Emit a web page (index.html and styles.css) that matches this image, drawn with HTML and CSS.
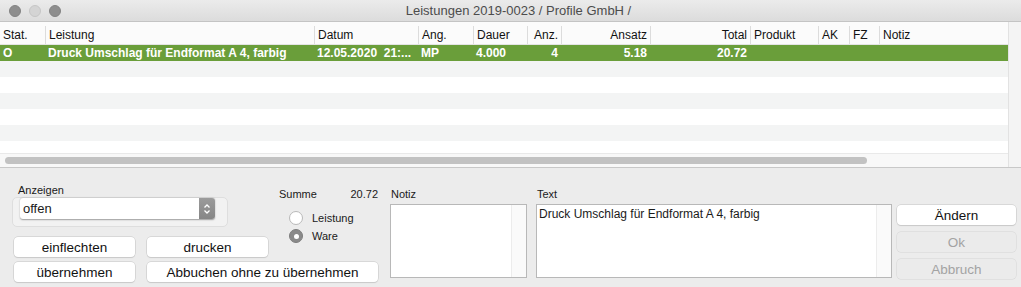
FILE: index.html
```html
<!DOCTYPE html>
<html lang="de">
<head>
  <meta charset="UTF-8">
  <title>Leistungen 2019-0023 / Profile GmbH /</title>
  <link rel="stylesheet" href="styles.css">
</head>
<body>
  <div class="window">

    <header class="titlebar">
      <div class="lights"><span class="dark"></span><span></span><span class="dark"></span></div>
      <div class="title">Leistungen 2019-0023 / Profile GmbH /</div>
    </header>

    <section class="list">
      <div class="grid">
        <div class="row head">
          <div class="c">Stat.</div>
          <div class="c">Leistung</div>
          <div class="c">Datum</div>
          <div class="c">Ang.</div>
          <div class="c">Dauer</div>
          <div class="c r">Anz.</div>
          <div class="c r">Ansatz</div>
          <div class="c r">Total</div>
          <div class="c">Produkt</div>
          <div class="c">AK</div>
          <div class="c">FZ</div>
          <div class="c">Notiz</div>
        </div>
        <div class="row sel">
          <div class="c">O</div>
          <div class="c">Druck Umschlag für Endformat A 4, farbig</div>
          <div class="c">12.05.2020&nbsp;&nbsp;21:...</div>
          <div class="c">MP</div>
          <div class="c">4.000</div>
          <div class="c r">4</div>
          <div class="c r">5.18</div>
          <div class="c r">20.72</div>
          <div class="c"></div>
          <div class="c"></div>
          <div class="c"></div>
          <div class="c"></div>
        </div>
        <div class="row alt"></div>
        <div class="row"></div>
        <div class="row alt"></div>
        <div class="row"></div>
        <div class="row alt"></div>
        <div class="row last"></div>
        <div class="hscroll"><div class="thumb"></div></div>
      </div>
      <div class="vscroll"></div>
    </section>

    <section class="panel">
      <div class="left">
        <div class="anzeigen">
          <label>Anzeigen</label>
          <div class="group">
            <div class="select">
              <span>offen</span>
              <span class="stepper">
                <svg width="10" height="14" viewBox="0 0 10 14"><path d="M2.5 5.5 L5 3 L7.5 5.5 M2.5 8.5 L5 11 L7.5 8.5" fill="none" stroke="#fff" stroke-width="1.3"/></svg>
              </span>
            </div>
          </div>
        </div>
        <div class="summe">
          <div class="sum-line"><span>Summe</span><span>20.72</span></div>
          <div class="radio first"><span class="dot"></span>Leistung</div>
          <div class="radio on"><span class="dot"></span>Ware</div>
        </div>
        <button class="btn b1">einflechten</button>
        <button class="btn b2">drucken</button>
        <button class="btn b3">übernehmen</button>
        <button class="btn b4">Abbuchen ohne zu übernehmen</button>
      </div>

      <div class="field notiz">
        <label>Notiz</label>
        <div class="area"><div class="txt"></div><div class="bar"></div></div>
      </div>

      <div class="field text">
        <label>Text</label>
        <div class="area"><div class="txt">Druck Umschlag für Endformat A 4, farbig</div><div class="bar"></div></div>
      </div>

      <div class="actions">
        <button class="btn">Ändern</button>
        <button class="btn off">Ok</button>
        <button class="btn off">Abbruch</button>
      </div>
    </section>

  </div>
</body>
</html>
```

FILE: styles.css
```css
*{ box-sizing: border-box; }

body{
  margin: 0; padding: 0;
  background-color: #ececec;
  font-family: "Liberation Sans", Arial, sans-serif;
  font-size: 12px;
  color: #1a1a1a;
}

.window{ width: 1021px; height: 287px; overflow: hidden; }

/* titlebar */
.titlebar{
  height: 22px;
  display: flex;
  align-items: center;
  position: relative;
  background: linear-gradient(#ebebeb, #dcdcdc);
  border-bottom: 1px solid #c4c4c4;
}
.titlebar .lights{ display: flex; gap: 8px; padding-left: 9px; padding-top: 1px; }
.titlebar .lights span{
  width: 12px; height: 12px; border-radius: 50%;
  background: #d4d4d4; border: 1px solid #c6c6c6;
}
.titlebar .lights span.dark{ background: #8e8e8e; border-color: #838383; }
.titlebar .title{
  position: absolute; left: 0; right: 0; text-align: center;
  font-size: 13px; color: #4c4c4c; padding-left: 16px;
}

/* table */
.list{ display: flex; height: 146px; border-bottom: 1px solid #c8c8c8; background: #fff; }
.list .grid{ width: 1009px; display: flex; flex-direction: column; border-right: 1px solid #e2e2e2; }
.list .vscroll{ flex: 1; background: #f4f4f4; }

.row{
  display: grid;
  grid-template-columns: 45px 269px 104px 55px 54px 34px 89px 100px 68px 31px 30px 1fr;
  height: 16px;
  flex: none;
}
.row .c{ padding: 0 3px; white-space: nowrap; overflow: hidden; line-height: 16px; }
.row .c.r{ text-align: right; }

.row.head{ height: 23px; background: #fbfbfb; border-bottom: 1px solid #e4e4e4; }
.row.head .c{ color: #111; border-left: 1px solid #dcdcdc; margin: 4px 0 0; line-height: 18px; }
.row.head .c:first-child{ border-left: none; }

.row.sel{ background: #6a9e3a; color: #fff; font-weight: bold; }
.row.alt{ background: #f3f4f4; }
.row.last{ height: 12px; }

.hscroll{ height: 15px; background: #f8f8f8; border-top: 1px solid #e9e9e9; padding: 3px 0 0 5px; }
.hscroll .thumb{ width: 862px; height: 7px; border-radius: 4px; background: #c2c2c2; }

/* bottom panel */
.panel{ display: flex; align-items: flex-start; padding: 16px 0 0 12px; }

.left{
  width: 366px;
  display: grid;
  grid-template-columns: 135px 142px 89px;
  grid-template-rows: 48px 20px 20px;
  row-gap: 5px;
}
.anzeigen{ grid-column: 1 / 3; grid-row: 1; }
.anzeigen label{ display: block; font-size: 11px; padding-left: 6px; height: 13px; line-height: 13px; }
.anzeigen .group{
  width: 216px; height: 30px;
  border: 1px solid #dedede; border-radius: 5px;
  background: #f2f2f2;
  padding: 0 0 0 7px;
}
.select{
  width: 195px; height: 21px;
  display: flex; align-items: center; justify-content: space-between;
  background: #fff;
  border-radius: 3px;
  box-shadow: 0 0.5px 1.5px rgba(0,0,0,.35);
  font-size: 13px; padding-left: 3px;
}
.select .stepper{
  width: 16px; height: 21px;
  display: flex; align-items: center; justify-content: center;
  background: linear-gradient(#9b9b9b, #868686);
  border-radius: 0 3px 3px 0;
}

.summe{ grid-column: 3; grid-row: 1 / 3; padding-top: 4px; }
.sum-line{ display: flex; justify-content: space-between; font-size: 11px; height: 13px; line-height: 13px; margin-left: -10px; }
.radio{ display: flex; align-items: center; gap: 9px; font-size: 11px; height: 18px; }
.radio.first{ margin-top: 8px; }
.radio .dot{
  width: 14px; height: 14px; border-radius: 50%;
  background: #fff; border: 1px solid #b9b9b9;
  display: flex; align-items: center; justify-content: center;
}
.radio.on .dot{ background: #8a8a8a; border-color: #7d7d7d; }
.radio.on .dot::after{ content: ""; width: 5px; height: 5px; border-radius: 50%; background: #fff; }

.btn{
  height: 20px;
  font-family: "Liberation Sans", Arial, sans-serif;
  font-size: 13.5px;
  color: #111;
  background: #fff;
  border: none;
  border-radius: 4px;
  box-shadow: 0 0 0 0.5px #c4c4c4, 0 1px 1px rgba(0,0,0,.12);
  padding: 0;
}
.left .btn{ width: 121px; }
.left .b1{ grid-column: 1; grid-row: 2; margin-left: 2px; }
.left .b2{ grid-column: 2; grid-row: 2; }
.left .b3{ grid-column: 1; grid-row: 3; margin-left: 2px; }
.left .b4{ grid-column: 2 / 4; grid-row: 3; width: 231px; }

.field label{ display: block; font-size: 11px; height: 20px; line-height: 13px; padding: 4px 0 0 1px; }
.field .area{
  height: 74px; display: flex;
  background: #fff; border: 1px solid #b8b8b8;
}
.field .txt{ flex: 1; padding: 2px 2px; font-size: 12px; }
.field .bar{ width: 15px; background: #fafafa; border-left: 1px solid #ececec; }
.notiz{ width: 137px; margin-left: 12px; }
.text{ width: 356px; margin-left: 9px; }

.actions{ width: 119px; margin-left: 5px; padding-top: 21px; display: flex; flex-direction: column; gap: 7px; }
.actions .btn{ width: 119px; }
.actions .btn.off{ background: #ebebeb; color: #a3a3a3; box-shadow: 0 0 0 0.5px #d4d4d4; }
```
